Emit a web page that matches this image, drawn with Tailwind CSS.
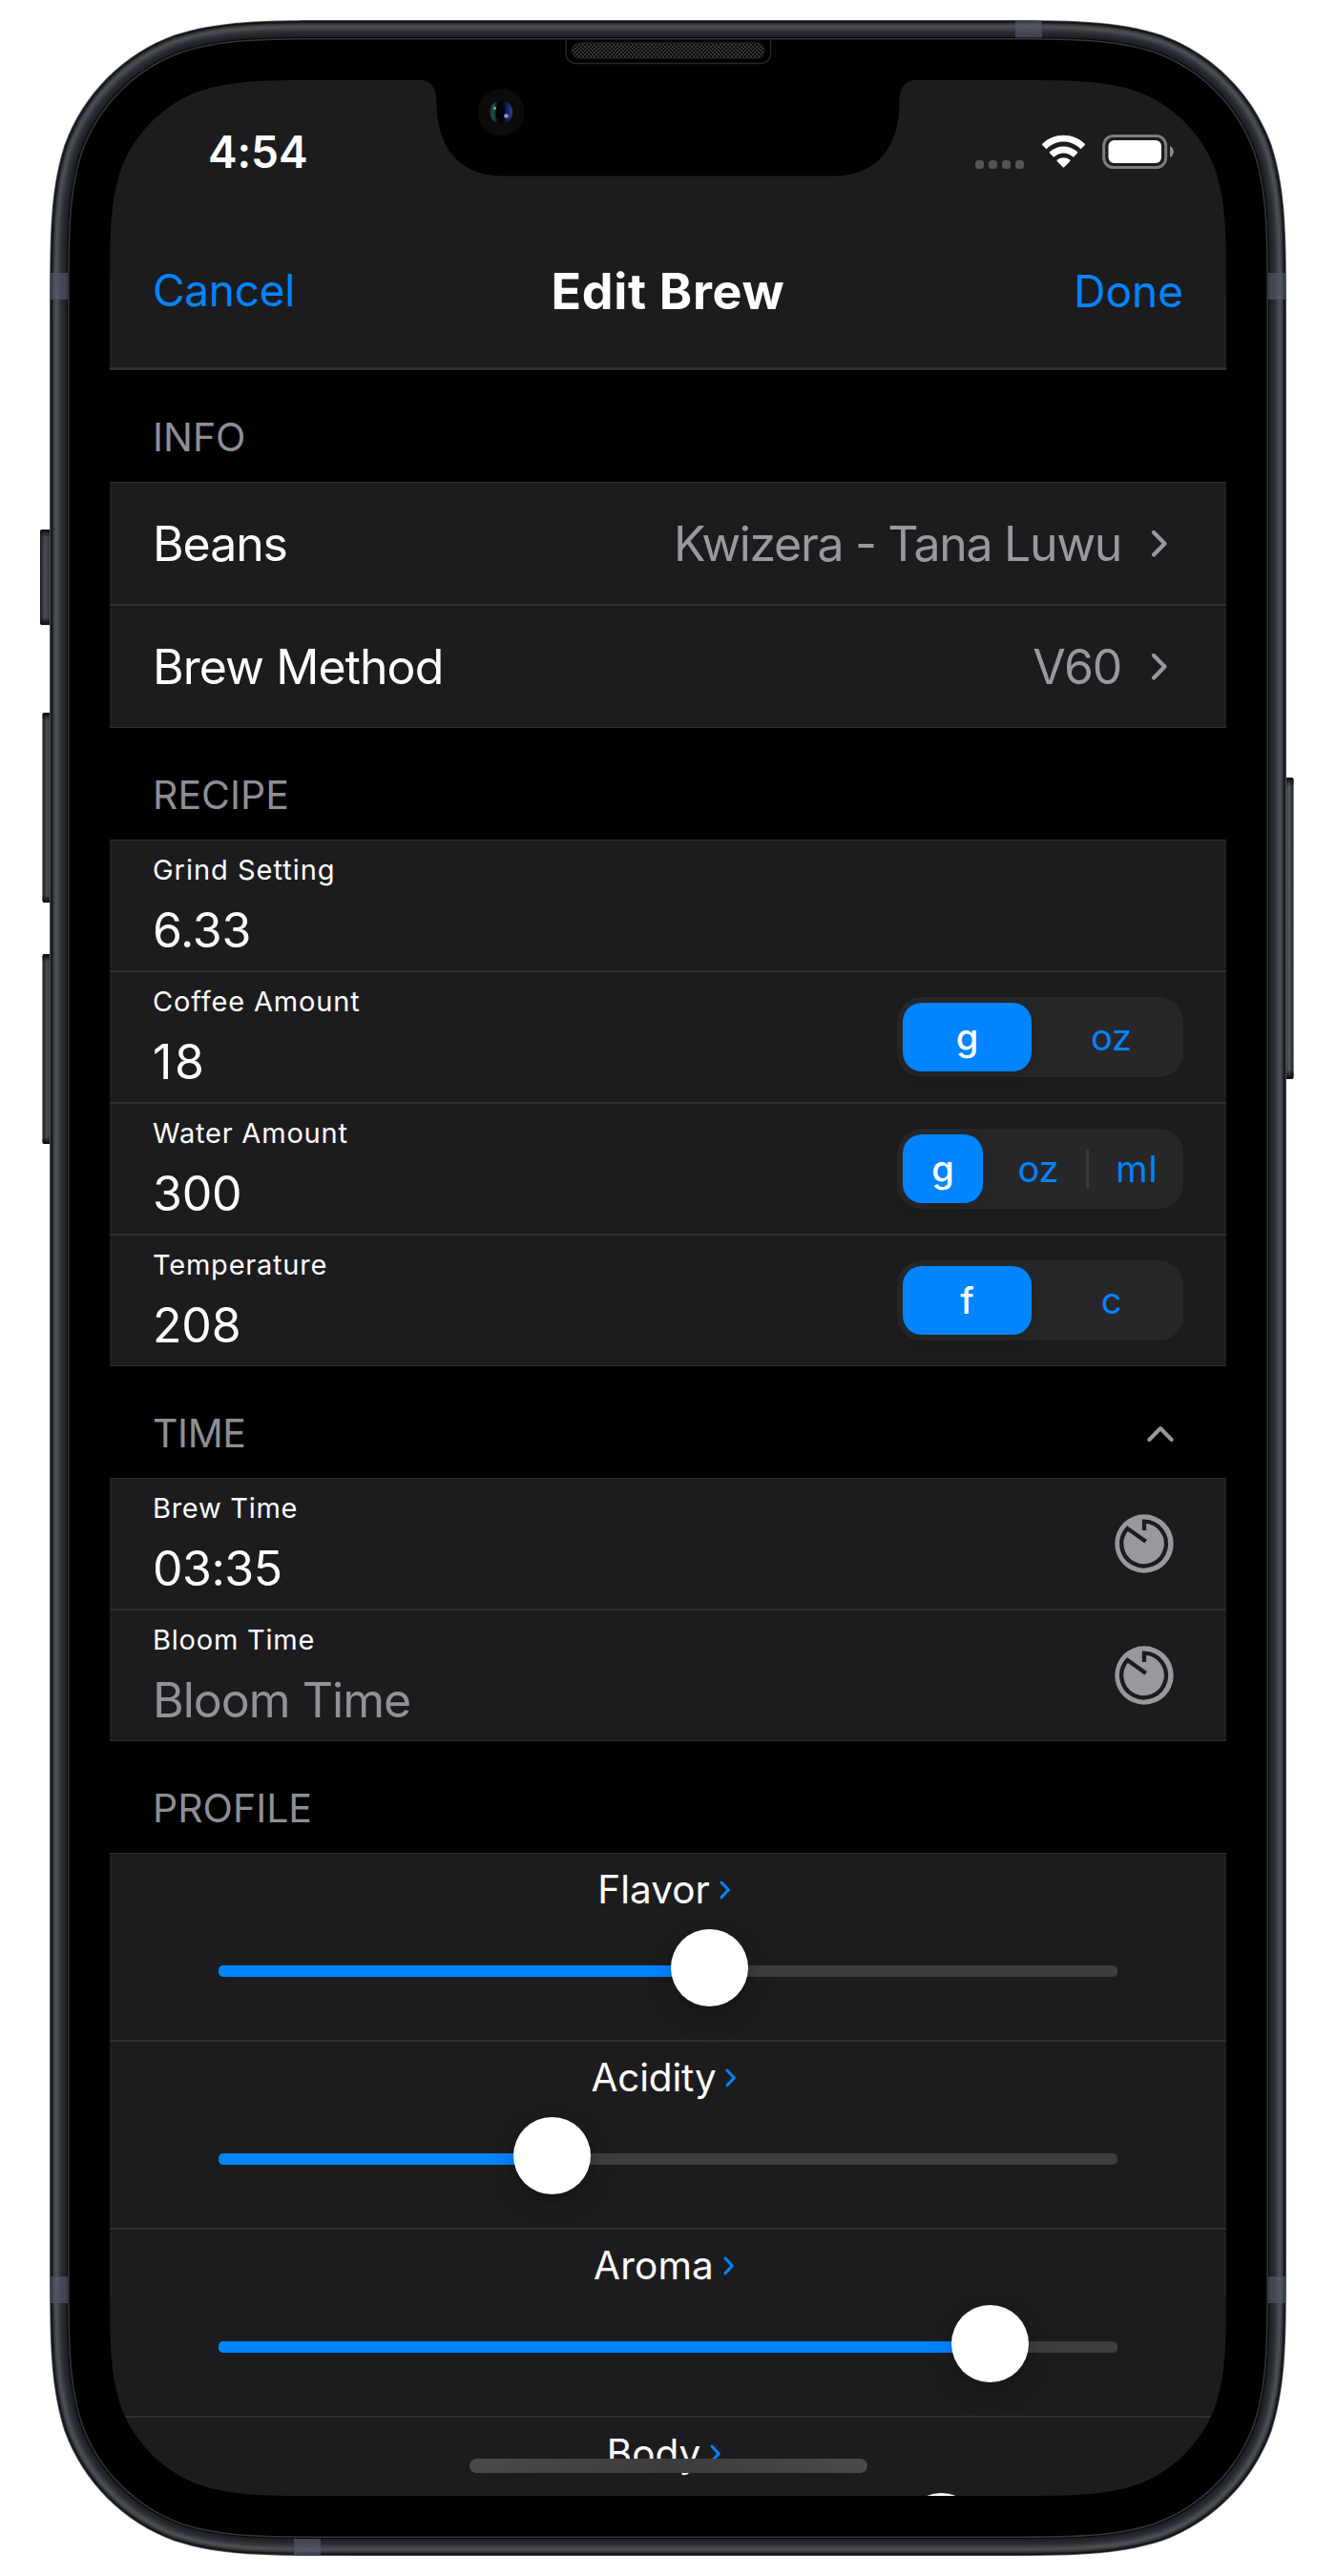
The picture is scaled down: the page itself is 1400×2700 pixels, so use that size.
<!DOCTYPE html>
<html lang="en">
<head>
<meta charset="utf-8">
<title>Edit Brew</title>
<script src="https://cdn.jsdelivr.net/npm/@tailwindcss/browser@4"></script>
</head>
<body class="bg-white">
<svg width="0" height="0" class="absolute">
  <defs>
    <symbol id="chev" viewBox="0 0 18 30"><path d="M3 3 14.5 14.7 3 26.5" fill="none" stroke="#98989f" stroke-width="4.2" stroke-linecap="round" stroke-linejoin="round"/></symbol>
    <symbol id="chev-sm" viewBox="0 0 12 20"><path d="M2 2 9.3 9.9 2 17.6" fill="none" stroke="#0084ff" stroke-width="3" stroke-linecap="round" stroke-linejoin="round"/></symbol>
    <symbol id="timer" viewBox="-31 -31 62 62">
      <circle r="30.7" fill="#98989f"/>
      <path d="M0-14V-23.4A23.4 23.4 0 1 1-17.5-16L1.7-2.2" fill="none" stroke="#1c1c1e" stroke-width="4.3" stroke-miterlimit="8"/>
    </symbol>
  </defs>
</svg>
<div class="relative h-[2700px] w-[1400px] overflow-hidden font-['Inter',sans-serif]">

  <!-- device body -->
  <svg class="absolute inset-0" width="1400" height="2700" viewBox="0 0 1400 2700">
    <defs>
      <linearGradient id="btnL" x1="0" x2="1" y1="0" y2="0"><stop offset="0" stop-color="#14181c"/><stop offset=".35" stop-color="#4a4d52"/><stop offset=".7" stop-color="#33373b"/><stop offset="1" stop-color="#0c1014"/></linearGradient>
      <linearGradient id="btnR" x1="1" x2="0" y1="0" y2="0"><stop offset="0" stop-color="#14181c"/><stop offset=".35" stop-color="#55585d"/><stop offset=".7" stop-color="#33373b"/><stop offset="1" stop-color="#0c1014"/></linearGradient>
      <linearGradient id="cap" x1="0" x2="0" y1="0" y2="1"><stop offset="0" stop-color="#05080b"/><stop offset="1" stop-color="#05080b" stop-opacity="0"/></linearGradient>
      <linearGradient id="capB" x1="0" x2="0" y1="1" y2="0"><stop offset="0" stop-color="#05080b"/><stop offset="1" stop-color="#05080b" stop-opacity="0"/></linearGradient>
    </defs>
    <g fill="url(#btnL)">
      <rect x="42" y="555" width="14" height="100" rx="2.5"/>
      <rect x="44.5" y="747" width="12" height="199" rx="2.5"/>
      <rect x="44.5" y="1000" width="12" height="199" rx="2.5"/>
    </g>
    <rect x="1343" y="815" width="12.5" height="316" rx="2.5" fill="url(#btnR)"/>
    <g fill="url(#cap)">
      <rect x="42" y="555" width="11" height="8" rx="2"/><rect x="44.5" y="747" width="9" height="8" rx="2"/><rect x="44.5" y="1000" width="9" height="8" rx="2"/><rect x="1346" y="815" width="9.5" height="10" rx="2"/>
    </g>
    <g fill="url(#capB)">
      <rect x="42" y="647" width="11" height="8" rx="2"/><rect x="44.5" y="938" width="9" height="8" rx="2"/><rect x="44.5" y="1191" width="9" height="8" rx="2"/><rect x="1346" y="1121" width="9.5" height="10" rx="2"/>
    </g>
    <g id="frame"></g>
    <g fill="#56586b" fill-opacity=".62">
      <rect x="52.5" y="286" width="18.5" height="28"/><rect x="1329" y="286" width="18.5" height="28"/>
      <rect x="52.5" y="2386" width="18.5" height="28"/><rect x="1329" y="2386" width="18.5" height="28"/>
      <rect x="1064" y="21.5" width="28" height="18"/><rect x="308" y="2661" width="28" height="18"/>
    </g>
  </svg>

  <!-- screen -->
  <main id="screen" class="relative ml-[115px] mt-[84px] flex h-[2532px] w-[1170px] flex-col overflow-hidden bg-black text-white">
    <header class="flex h-[304px] shrink-0 flex-col border-b-[3px] border-[#303032] bg-[#1c1c1e]">
      <div class="flex h-[142px] items-center justify-between pl-[103px] pr-[54px] pt-[7px]">
        <span class="text-[46px] font-semibold leading-[60px] tracking-[-0.1px]">4:54</span>
        <div class="flex items-end gap-[17px]">
          <div class="flex gap-[5px]">
            <i class="h-[9px] w-[9px] rounded-[3.5px] bg-[#545456]"></i><i class="h-[9px] w-[9px] rounded-[3.5px] bg-[#545456]"></i><i class="h-[9px] w-[9px] rounded-[3.5px] bg-[#545456]"></i><i class="h-[9px] w-[9px] rounded-[3.5px] bg-[#545456]"></i>
          </div>
          <svg width="49" height="36" viewBox="0 0 49 36" fill="#fff">
            <path d="M24.5 7.6c6.6 0 12.800 2.600 17.400 7.200.4.3.9.3 1.200 0l3.700-3.800c.4-.4.4-1 0-1.300C34.400-2.300 14.600-2.300 2.200 9.700c-.4.300-.4.900 0 1.300l3.700 3.800c.3.300.8.300 1.200 0C11.700 10.200 17.900 7.600 24.500 7.600z"/>
            <path d="M24.500 19.600c3.600 0 7 1.400 9.600 3.700.4.300.9.300 1.200 0l3.700-3.800c.4-.4.4-1 0-1.400-8.200-7.600-20.800-7.600-29 0-.4.4-.4 1 0 1.400l3.700 3.800c.3.300.8.300 1.200 0 2.600-2.300 6-3.700 9.600-3.700z"/>
            <path d="M31.300 27.900c.4-.4.4-1 0-1.300-3.900-3.300-9.700-3.300-13.600 0-.4.3-.4.900 0 1.300l6.200 6.400c.3.400.9.400 1.200 0z"/>
          </svg>
          <svg class="-ml-px" width="76" height="36" viewBox="0 0 76 36">
            <rect x="1.700" y="1.500" width="65" height="33" rx="10" fill="none" stroke="#7c7c7e" stroke-width="3"/>
            <rect x="6.500" y="6" width="55.500" height="24" rx="6" fill="#fff"/>
            <path d="M71 12c5 2 5 10 0 12z" fill="#8c8c8e"/>
          </svg>
        </div>
      </div>
      <nav class="grid h-[159px] grid-cols-[1fr_auto_1fr] items-center px-[45px] leading-[64px]">
        <span class="pb-[3px] text-[46px] tracking-[-0.3px] text-[#0084ff]">Cancel</span>
        <h1 class="text-[52px] font-bold tracking-[0.7px]">Edit Brew</h1>
        <span class="pb-px text-right text-[46px] text-[#0084ff]">Done</span>
      </nav>
    </header>

    <h2 class="flex h-[117px] shrink-0 items-center px-[45px] pt-6 text-[41px] leading-none text-[#8e8e95]">INFO</h2>
    <section class="flex shrink-0 flex-col border-y border-[#303032] bg-[#1c1c1e] text-[50px]">
      <div class="flex h-[127px] items-center pl-[45px] pr-[61px] leading-[64px]">
        <span class="tracking-[-1.100px]">Beans</span>
        <span class="ml-auto tracking-[-1.330px] text-[#98989f]">Kwizera - Tana Luwu</span>
        <svg class="ml-[31px]" width="18" height="30"><use href="#chev"/></svg>
      </div>
      <div class="flex h-[129px] items-center border-t-2 border-[#303032] pl-[45px] pr-[61px] leading-[64px]">
        <span class="tracking-[-0.950px]">Brew Method</span>
        <span class="ml-auto tracking-[-1.260px] text-[#98989f]">V60</span>
        <svg class="ml-[31px]" width="18" height="30"><use href="#chev"/></svg>
      </div>
    </section>

    <h2 class="flex h-[117px] shrink-0 items-center px-[45px] pt-6 text-[41px] leading-none text-[#8e8e95]">RECIPE</h2>
    <section class="flex shrink-0 flex-col border-y border-[#303032] bg-[#1c1c1e]">
      <div class="flex h-[136px] flex-col px-[45px]">
        <label class="text-[29px] leading-[61px] tracking-[0.980px]">Grind Setting</label>
        <span class="text-[50px] leading-[66px] tracking-[-0.260px]">6.33</span>
      </div>
      <div class="flex h-[138px] items-center justify-between border-t-2 border-[#303032] px-[45px]">
        <div class="flex h-full flex-col">
          <label class="text-[29px] leading-[61px] tracking-[0.840px]">Coffee Amount</label>
          <span class="text-[50px] leading-[66px] tracking-[2.600px]">18</span>
        </div>
        <div class="flex h-[84px] w-[300px] items-center rounded-[26px] bg-[#27272a] px-1.5 text-center text-[38px] leading-[72px] text-[#0084ff]">
          <span class="w-[135px] rounded-[20px] bg-[#0084ff] font-medium text-white shadow-[0_6px_16px_rgba(0,0,0,.12)]">g</span>
          <span class="flex-1 pl-[14px]">oz</span>
        </div>
      </div>
      <div class="flex h-[138px] items-center justify-between border-t-2 border-[#303032] px-[45px]">
        <div class="flex h-full flex-col">
          <label class="text-[29px] leading-[61px] tracking-[0.800px]">Water Amount</label>
          <span class="text-[50px] leading-[66px] tracking-[-0.200px]">300</span>
        </div>
        <div class="flex h-[84px] w-[300px] items-center rounded-[26px] bg-[#27272a] px-1.5 text-center text-[38px] leading-[72px] text-[#0084ff]">
          <span class="w-[84px] rounded-[20px] bg-[#0084ff] font-medium text-white shadow-[0_6px_16px_rgba(0,0,0,.12)]">g</span>
          <span class="w-[108px] pl-2">oz</span>
          <i class="h-[42px] w-[3px] rounded bg-[#3a3a3d]"></i>
          <span class="flex-1 pl-2 tracking-[1px]">ml</span>
        </div>
      </div>
      <div class="flex h-[138px] items-center justify-between border-t-2 border-[#303032] px-[45px]">
        <div class="flex h-full flex-col">
          <label class="text-[29px] leading-[61px] tracking-[0.780px]">Temperature</label>
          <span class="text-[50px] leading-[66px] tracking-[-0.200px]">208</span>
        </div>
        <div class="flex h-[84px] w-[300px] items-center rounded-[26px] bg-[#27272a] px-1.5 text-center text-[38px] leading-[72px] text-[#0084ff]">
          <span class="w-[135px] rounded-[20px] bg-[#0084ff] font-medium text-white shadow-[0_6px_16px_rgba(0,0,0,.12)]">f</span>
          <span class="flex-1 pl-[14px]">c</span>
        </div>
      </div>
    </section>

    <h2 class="flex h-[117px] shrink-0 items-center justify-between pl-[45px] pr-[54px] pt-6 text-[41px] leading-none tracking-[-0.400px] text-[#8e8e95]">TIME
      <svg width="30" height="18" viewBox="0 0 30 18"><path d="M3.300 15 15 3 26.700 15" fill="none" stroke="#98989f" stroke-width="4" stroke-linecap="round" stroke-linejoin="round"/></svg>
    </h2>
    <section class="flex shrink-0 flex-col border-y border-[#303032] bg-[#1c1c1e]">
      <div class="flex h-[136px] items-center justify-between pl-[45px] pr-[55px]">
        <div class="flex h-full flex-col">
          <label class="text-[29px] leading-[61px] tracking-[0.720px]">Brew Time</label>
          <span class="text-[50px] leading-[66px] tracking-[-0.500px]">03:35</span>
        </div>
        <svg width="62" height="62"><use href="#timer"/></svg>
      </div>
      <div class="flex h-[138px] items-center justify-between border-t-2 border-[#303032] pl-[45px] pr-[55px]">
        <div class="flex h-full flex-col">
          <label class="text-[29px] leading-[61px] tracking-[0.780px]">Bloom Time</label>
          <span class="text-[50px] leading-[66px] tracking-[-0.980px] text-[#919198]">Bloom Time</span>
        </div>
        <svg width="62" height="62"><use href="#timer"/></svg>
      </div>
    </section>

    <h2 class="flex h-[117px] shrink-0 items-center px-[45px] pt-6 text-[41px] leading-none text-[#8e8e95]">PROFILE</h2>
    <section class="flex shrink-0 flex-col border-t border-[#303032] bg-[#1c1c1e] text-[40.500px] leading-[75px]">
      <div class="flex h-[195px] flex-col items-center">
        <div class="flex items-center gap-2.5 pr-[8px]">Flavor <svg width="12" height="20"><use href="#chev-sm"/></svg></div>
        <div class="relative mt-[42px] h-3 w-[942px] rounded-[5px] bg-[#3d3d3f]">
          <div class="h-full rounded-l-[5px] bg-[#0084ff]" style="width:514px"></div>
          <i class="absolute -top-[38px] h-[81px] w-[81px] rounded-full bg-white shadow-[0_10px_30px_rgba(0,0,0,.16),0_3px_8px_rgba(0,0,0,.12)]" style="left:474px"></i>
        </div>
      </div>
      <div class="flex h-[197px] flex-col items-center border-t-2 border-[#303032]">
        <div class="flex items-center gap-2.5 pr-[8px] tracking-[-0.200px]">Acidity <svg width="12" height="20"><use href="#chev-sm"/></svg></div>
        <div class="relative mt-[42px] h-3 w-[942px] rounded-[5px] bg-[#3d3d3f]">
          <div class="h-full rounded-l-[5px] bg-[#0084ff]" style="width:349px"></div>
          <i class="absolute -top-[38px] h-[81px] w-[81px] rounded-full bg-white shadow-[0_10px_30px_rgba(0,0,0,.16),0_3px_8px_rgba(0,0,0,.12)]" style="left:309px"></i>
        </div>
      </div>
      <div class="flex h-[197px] flex-col items-center border-t-2 border-[#303032]">
        <div class="flex items-center gap-2.5 pr-[8px] tracking-[0.200px]">Aroma <svg width="12" height="20"><use href="#chev-sm"/></svg></div>
        <div class="relative mt-[42px] h-3 w-[942px] rounded-[5px] bg-[#3d3d3f]">
          <div class="h-full rounded-l-[5px] bg-[#0084ff]" style="width:808px"></div>
          <i class="absolute -top-[38px] h-[81px] w-[81px] rounded-full bg-white shadow-[0_10px_30px_rgba(0,0,0,.16),0_3px_8px_rgba(0,0,0,.12)]" style="left:768px"></i>
        </div>
      </div>
      <div class="flex h-[197px] flex-col items-center border-t-2 border-[#303032]">
        <div class="flex items-center gap-2.5 pr-[8px]">Body <svg width="12" height="20"><use href="#chev-sm"/></svg></div>
        <div class="relative mt-[42px] h-3 w-[942px] rounded-[5px] bg-[#3d3d3f]">
          <i class="absolute -top-[38px] h-[81px] w-[81px] rounded-full bg-white" style="left:717px"></i>
        </div>
      </div>
    </section>
    <div class="absolute bottom-6 left-[377px] h-[15px] w-[417px] rounded-full bg-linear-to-r from-[#4a4a4a] via-[#3c3c3c] to-[#4a4a4a]"></div>
  </main>

  <!-- notch, speaker and camera over the screen -->
  <svg class="pointer-events-none absolute inset-0" width="1400" height="2700" viewBox="0 0 1400 2700">
    <defs>
      <pattern id="mesh" width="4" height="4" patternUnits="userSpaceOnUse"><rect width="4" height="4" fill="#0c0c0c"/><rect width="2" height="2" fill="#363636"/><rect x="2" y="2" width="2" height="2" fill="#363636"/></pattern>
      <linearGradient id="lens" x1="0" x2="1" y1="0" y2="0"><stop offset="0" stop-color="#1c2228"/><stop offset=".16" stop-color="#175447"/><stop offset=".36" stop-color="#04100f"/><stop offset=".58" stop-color="#02030a"/><stop offset=".82" stop-color="#10297c"/><stop offset="1" stop-color="#4a4080"/></linearGradient>
    </defs>
    <path d="M438 83.500C452 84 457.500 92 457.500 108C457.500 155 482 184.500 527 184.500H873C918 184.500 942.500 155 942.500 108C942.500 92 948 84 962 83.500Z" fill="#000"/>
    <path d="M593 42V55Q593 66.500 605 66.500H795Q807.500 66.500 807.500 55V42" fill="#000" stroke="#262626" stroke-width="1.500"/>
    <rect x="599.500" y="45" width="201.500" height="16" rx="8" fill="url(#mesh)" stroke="#1e1e1e" stroke-width="1.500"/>
    <circle cx="525" cy="117.500" r="24.500" fill="#0b0b0b"/>
    <circle cx="525" cy="117.500" r="12" fill="url(#lens)"/>
    <ellipse cx="524" cy="117.500" rx="4.500" ry="11" fill="#010203"/>
    <circle cx="518.500" cy="113.500" r="1.400" fill="#5fb5b9"/><circle cx="530.500" cy="121.500" r="2.300" fill="#a08bd0"/>
  </svg>
</div>
<script>
// Continuous-corner rectangle outline: x0,y0 to x1,y1 with corner radius r.
function squircle(x0, y0, x1, y1, r) {
  const a = 1.528665 * r, b = 1.08849296 * r, c = 0.86840694 * r, d = 0.63149379 * r,
        e = 0.37282383 * r, f = 0.16905956 * r, g = 0.07491139 * r;
  return `M${x0 + a} ${y0}H${x1 - a}`
    + `C${x1 - b} ${y0} ${x1 - c} ${y0} ${x1 - d} ${y0 + g}C${x1 - e} ${y0 + f} ${x1 - f} ${y0 + e} ${x1 - g} ${y0 + d}C${x1} ${y0 + c} ${x1} ${y0 + b} ${x1} ${y0 + a}`
    + `V${y1 - a}C${x1} ${y1 - b} ${x1} ${y1 - c} ${x1 - g} ${y1 - d}C${x1 - f} ${y1 - e} ${x1 - e} ${y1 - f} ${x1 - d} ${y1 - g}C${x1 - c} ${y1} ${x1 - b} ${y1} ${x1 - a} ${y1}`
    + `H${x0 + a}C${x0 + b} ${y1} ${x0 + c} ${y1} ${x0 + d} ${y1 - g}C${x0 + e} ${y1 - f} ${x0 + f} ${y1 - e} ${x0 + g} ${y1 - d}C${x0} ${y1 - c} ${x0} ${y1 - b} ${x0} ${y1 - a}`
    + `V${y0 + a}C${x0} ${y0 + b} ${x0} ${y0 + c} ${x0 + g} ${y0 + d}C${x0 + f} ${y0 + e} ${x0 + e} ${y0 + f} ${x0 + d} ${y0 + g}C${x0 + c} ${y0} ${x0 + b} ${y0} ${x0 + a} ${y0}Z`;
}
// Metal band shading, from the outer edge inwards.
const bands = [[0,'#5d5f63'],[.8,'#12161a'],[2,'#171b20'],[3,'#2b2f34'],[4,'#393d42'],[5,'#44474c'],[6,'#4c4f54'],[7,'#4b4e53'],[8,'#45484d'],[9,'#3d4045'],[10,'#363a3f'],[11,'#30343a'],[12,'#2b2f35'],[13,'#272b31'],[14,'#24282e'],[15,'#22262c'],[16,'#1f2329'],[17,'#1a1d22'],[18,'#060708'],[19,'#353536'],[20.6,'#000']];
document.getElementById('frame').innerHTML = bands.map(([i, c]) =>
  `<path d="${squircle(52 + i, 21 + i, 1348 - i, 2679 - i, 207 - i)}" fill="${c}"/>`).join('');
document.getElementById('screen').style.clipPath = `path('${squircle(0, 0, 1170, 2532, 150)}')`;
</script>
</body>
</html>
